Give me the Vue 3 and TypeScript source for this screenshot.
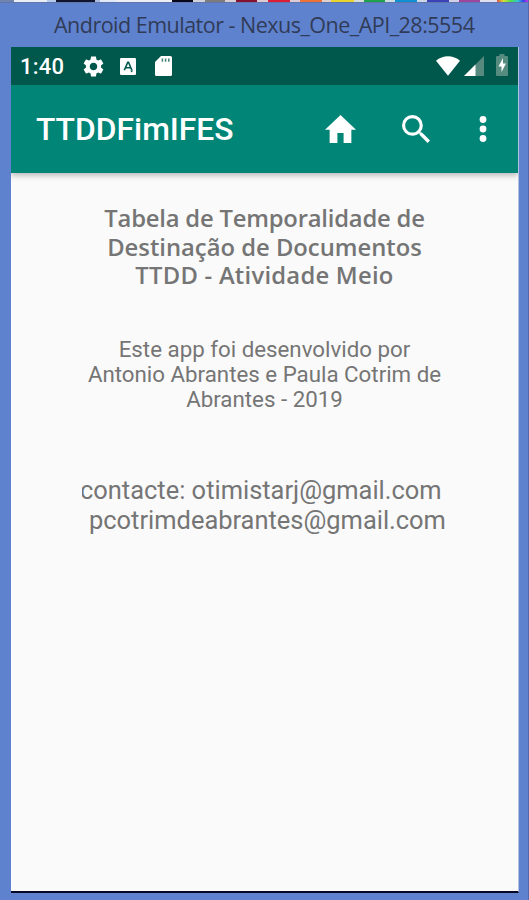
<script setup lang="ts">
interface Swatch { color: string; width: number }

const strip: Swatch[] = [
  { color: '#6f85b0', width: 14 }, { color: '#e9edf6', width: 33 }, { color: '#b4cbed', width: 9 },
  { color: '#10142e', width: 39 }, { color: '#a9bbdf', width: 5 }, { color: '#dfe9f8', width: 16 },
  { color: '#eeeff4', width: 56 }, { color: '#08081c', width: 21 }, { color: '#cfd2da', width: 12 },
  { color: '#7d7c7c', width: 20 }, { color: '#d7cfd8', width: 11 }, { color: '#86102f', width: 21 },
  { color: '#dccbd6', width: 11 }, { color: '#dd1c36', width: 22 }, { color: '#dccbd6', width: 10 },
  { color: '#ed7139', width: 22 }, { color: '#dccfd0', width: 9 }, { color: '#e8d52f', width: 23 },
  { color: '#d7dcd8', width: 10 }, { color: '#1da34b', width: 21 }, { color: '#cddce0', width: 10 },
  { color: '#0c91d4', width: 22 }, { color: '#cdd5e8', width: 10 }, { color: '#3b41b8', width: 22 },
  { color: '#d0cfea', width: 10 }, { color: '#9b479f', width: 21 }, { color: '#dfdff0', width: 17 },
]
const heading: string[] = ['Tabela de Temporalidade de', 'Destinação de Documentos', 'TTDD - Atividade Meio']
const credits: string[] = ['Este app foi desenvolvido por', 'Antonio Abrantes e Paula Cotrim de', 'Abrantes - 2019']
</script>

<template>
  <div class="window">
    <div class="strip">
      <i v-for="(s, i) in strip" :key="i" :style="{ background: s.color, width: s.width + 'px' }"></i>
      <i class="rainbow"></i>
    </div>
    <div class="caption"><span>Android Emulator - Nexus_One_API_28:5554</span></div>
    <div class="screen">
      <div class="status">
        <span class="clock">1:40</span>
        <svg class="gear" viewBox="2 2 20 20"><path fill="#fff" d="M19.14 12.94c.04-.3.06-.61.06-.94 0-.32-.02-.64-.07-.94l2.03-1.58c.18-.14.23-.41.12-.61l-1.92-3.32c-.12-.22-.37-.29-.59-.22l-2.39.96c-.5-.38-1.03-.7-1.62-.94l-.36-2.54c-.04-.24-.24-.41-.48-.41h-3.84c-.24 0-.43.17-.47.41l-.36 2.54c-.59.24-1.13.57-1.62.94l-2.39-.96c-.22-.08-.47 0-.59.22L2.74 8.87c-.12.21-.08.47.12.61l2.03 1.58c-.05.3-.09.63-.09.94s.02.64.07.94l-2.03 1.58c-.18.14-.23.41-.12.61l1.92 3.32c.12.22.37.29.59.22l2.39-.96c.5.38 1.03.7 1.62.94l.36 2.54c.05.24.24.41.48.41h3.84c.24 0 .44-.17.47-.41l.36-2.54c.59-.24 1.13-.56 1.62-.94l2.39.96c.22.08.47 0 .59-.22l1.92-3.32c.12-.22.07-.47-.12-.61l-2.01-1.58zM12 15.6c-1.98 0-3.6-1.62-3.6-3.6s1.62-3.6 3.6-3.6 3.6 1.62 3.6 3.6-1.62 3.6-3.6 3.6z" /></svg>
        <svg class="keyboard" viewBox="0 0 16 17"><rect width="16" height="17" rx="1.3" fill="#fff" /><path d="M4.3 12.3 7.800 4.300h.7l3.400 8M5.600 9.800h5" fill="none" stroke="#00574b" stroke-width="1.600" /><path d="M10.200 12.500h3l-1.500 2z" fill="#00574b" /></svg>
        <svg class="card" viewBox="0 0 17 20"><path d="M6 0h9.400Q17 0 17 1.600v16.800Q17 20 15.400 20H1.600Q0 20 0 18.400V6z" fill="#fff" /><path d="M7.400 2.600v3.200M10.600 2.600v3.200M13.800 2.600v3.200" stroke="#00574b" stroke-opacity=".75" stroke-width="1.500" /></svg>
        <svg class="wifi" viewBox="0 0 24 20"><path d="M0 4.700C6.500-1.300 17.500-1.300 24 4.700L12 19.700z" fill="#fff" /></svg>
        <svg class="signal" viewBox="0 0 20 20"><path d="M0 20 20 0v20z" fill="#58897f" /><path d="M0 20 11.500 8.500V20z" fill="#fff" /></svg>
        <svg class="battery" viewBox="0 0 12 22"><path d="M3.500 0h5v2H11q1 0 1 1v18q0 1-1 1H1q-1 0-1-1V3q0-1 1-1h2.500z" fill="#568b80" /><path d="M7 4 2.500 12.500H5.500V18L10 9.600H7z" fill="#fff" /></svg>
      </div>
      <div class="toolbar">
        <span class="name">TTDDFimIFES</span>
        <svg class="home" viewBox="2 3 20 17" preserveAspectRatio="none"><path fill="#fff" d="M10 20v-6h4v6h5v-8h3L12 3 2 12h3v8z" /></svg>
        <svg class="search" viewBox="3 3 17.490 17.490"><path fill="#fff" d="M15.500 14h-.79l-.28-.27A6.471 6.471 0 0 0 16 9.500 6.500 6.500 0 1 0 9.500 16c1.610 0 3.090-.59 4.230-1.570l.27.28v.79l5 4.990L20.490 19l-4.990-5zm-6 0C7.010 14 5 11.990 5 9.500S7.010 5 9.500 5 14 7.010 14 9.500 11.990 14 9.500 14z" /></svg>
        <svg class="more" viewBox="0 0 8 28"><g fill="#fff"><circle cx="4" cy="4.500" r="3.400" /><circle cx="4" cy="14" r="3.400" /><circle cx="4" cy="23.500" r="3.400" /></g></svg>
      </div>
      <main>
        <h1><span v-for="(l, i) in heading" :key="i">{{ l }}</span></h1>
        <p class="credits"><span v-for="(l, i) in credits" :key="i">{{ l }}</span></p>
        <div class="contact">
          <div class="clip"><span>contacte: otimistarj@gmail.com</span></div>
          <span class="second">pcotrimdeabrantes@gmail.com</span>
        </div>
      </main>
    </div>
  </div>
</template>

<style>
body { background: #5f82ce; overflow: hidden; }
</style>
<style scoped>
.window { width: 529px; height: 900px; background: #5f82ce; box-sizing: border-box; border-right: 1px solid #5369ac; overflow: hidden; font-family: Roboto, sans-serif; }
.strip { height: 2px; display: flex; width: 529px; border-bottom: 1px solid #6276aa; }
.strip i { flex: none; height: 2px; }
.strip .rainbow { flex: 1; background: linear-gradient(90deg, #d94e42, #d9df35 20%, #45df54 45%, #32c9d5 65%, #303df0 82%, #ed35df); }
.caption { height: 44px; padding-left: 54px; font: 21.500px/43px "Open Sans", sans-serif; color: #303b58; white-space: nowrap; }
.caption span { letter-spacing: -0.51px; }
.screen { width: 507px; margin-left: 11px; height: 844px; background: #fafafa; border-bottom: 2px solid #050822; border-right: 1px solid #b4c0df; }
.status { height: 38px; background: #00574b; display: flex; align-items: center; }
svg { flex: none; display: block; }
.clock { width: 64px; padding-left: 9px; font-size: 22px; font-weight: 500; color: #fff; letter-spacing: .2px; }
.gear { width: 21px; height: 21px; margin-left: -1px; }
.keyboard { width: 16px; height: 17px; margin-left: 16px; }
.card { width: 17px; height: 20px; margin-left: 19px; }
.wifi { width: 24px; height: 20px; margin-left: auto; }
.signal { width: 20px; height: 20px; margin: 0 12px 0 4px; }
.battery { width: 12px; height: 22px; margin: -3px 10px 0 0; }
.toolbar { height: 88px; background: #008577; display: flex; align-items: center; box-shadow: 0 2px 6px rgba(0,0,0,.3); clip-path: inset(0 0 -10px 0); }
.name { width: 289px; padding-left: 25px; color: #fff; font-size: 31.800px; line-height: 40px; font-weight: 500; }
.home { width: 31px; height: 28px; }
.search { width: 28px; height: 28px; margin-left: 46px; }
.more { width: 8px; height: 28px; margin-left: 49px; }
main { display: flex; flex-direction: column; color: #757575; white-space: nowrap; }
h1, p { margin: 0; }
h1, .credits { display: flex; flex-direction: column; align-items: center; }
h1 { margin-top: 31px; font: 600 23.800px/28.500px "Open Sans", sans-serif; }
h1 span:nth-child(1) { letter-spacing: -.2px; }
h1 span:nth-child(3) { letter-spacing: .25px; }
.credits { margin-top: 47px; font-size: 22.300px; line-height: 25.300px; }
.contact { margin: 63px 0 0 71px; font-size: 25.450px; line-height: 30px; }
.clip { height: 30px; overflow: hidden; }
.clip span { margin-left: -2px; }
.second { margin-left: 7px; }
</style>
